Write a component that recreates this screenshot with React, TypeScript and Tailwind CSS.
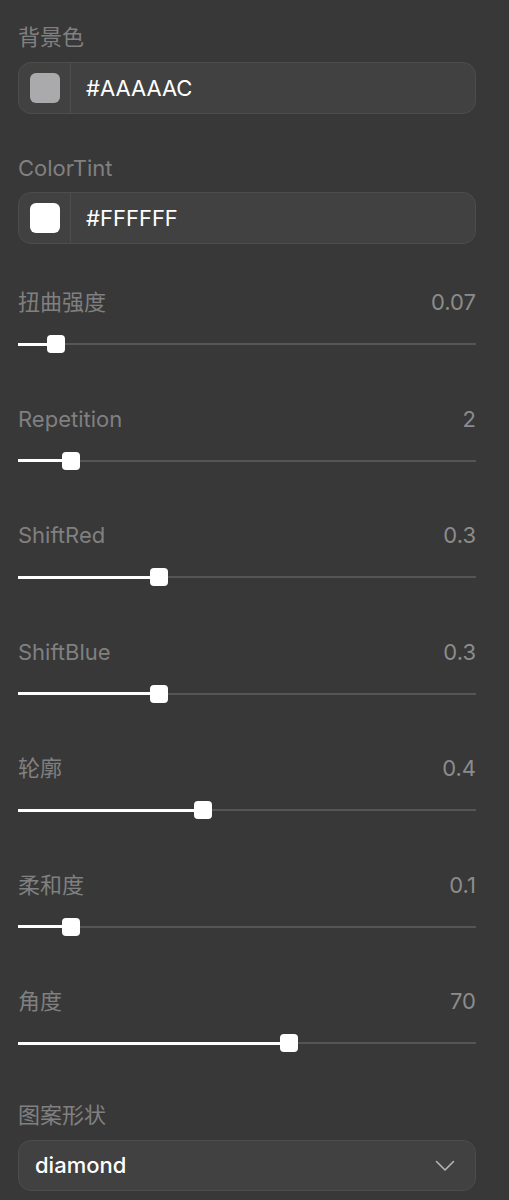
import React from "react";

const font = { fontFamily: 'Inter, "Noto Sans CJK SC", sans-serif' };

function Label({ children }: { children: React.ReactNode }) {
  return <div className="h-[28px] leading-[28px] text-[22px] text-[#808080]">{children}</div>;
}

function ColorInput({ color, value }: { color: string; value: string }) {
  return (
    <div className="flex h-[52px] items-stretch rounded-[13px] border border-[#4d4d4d] bg-[#414141]">
      <div className="flex w-[52px] items-center justify-center border-r border-[#4d4d4d]">
        <div className="h-[30px] w-[30px] rounded-[6px]" style={{ background: color }} />
      </div>
      <div className="flex items-center pl-[15px] text-[22px] text-white">{value}</div>
    </div>
  );
}

function Slider({ label, value, frac }: { label: string; value: string; frac: number }) {
  return (
    <div>
      <div className="flex h-[28px] items-center justify-between text-[22px] leading-[28px] text-[#808080]">
        <span>{label}</span>
        <span className="text-[#8c8c8c]">{value}</span>
      </div>
      <div className="relative mt-[19px] h-[18px]">
        <div className="absolute left-0 right-0 top-[8px] h-[2px] bg-[#555555]" />
        <div
          className="absolute left-0 top-[7.5px] h-[3px] bg-white"
          style={{ width: `calc(9px + ${frac} * (100% - 18px))` }}
        />
        <div
          className="absolute top-0 h-[18px] w-[18px] rounded-[4px] bg-white"
          style={{ left: `calc(${frac} * (100% - 18px))` }}
        />
      </div>
    </div>
  );
}

export default function App() {
  return (
    <div className="min-h-[1200px] bg-[#383838] pl-[18px] pr-[33px] pt-[23px]" style={font}>
      <Label>背景色</Label>
      <div className="mt-[11px]">
        <ColorInput color="#AAAAAC" value="#AAAAAC" />
      </div>
      <div className="mt-[40px]">
        <Label>ColorTint</Label>
      </div>
      <div className="mt-[10px]">
        <ColorInput color="#FFFFFF" value="#FFFFFF" />
      </div>
      <div className="mt-[44px] flex flex-col gap-[51.5px]">
        <Slider label="扭曲强度" value="0.07" frac={0.066} />
        <Slider label="Repetition" value="2" frac={0.1} />
        <Slider label="ShiftRed" value="0.3" frac={0.3} />
        <Slider label="ShiftBlue" value="0.3" frac={0.3} />
        <Slider label="轮廓" value="0.4" frac={0.4} />
        <Slider label="柔和度" value="0.1" frac={0.1} />
        <Slider label="角度" value="70" frac={0.595} />
      </div>
      <div className="mt-[49px]">
        <Label>图案形状</Label>
      </div>
      <div className="mt-[11px] flex h-[51px] items-center justify-between rounded-[13px] border border-[#4d4d4d] bg-[#414141] pl-[16px] pr-[20px]">
        <span className="text-[22px] font-medium text-white">diamond</span>
        <svg width="20" height="12" viewBox="0 0 20 12" fill="none">
          <path d="M1.5 1.5 L10 10 L18.5 1.5" stroke="#b5b5b5" strokeWidth="1.6" strokeLinecap="round" strokeLinejoin="round" />
        </svg>
      </div>
    </div>
  );
}
